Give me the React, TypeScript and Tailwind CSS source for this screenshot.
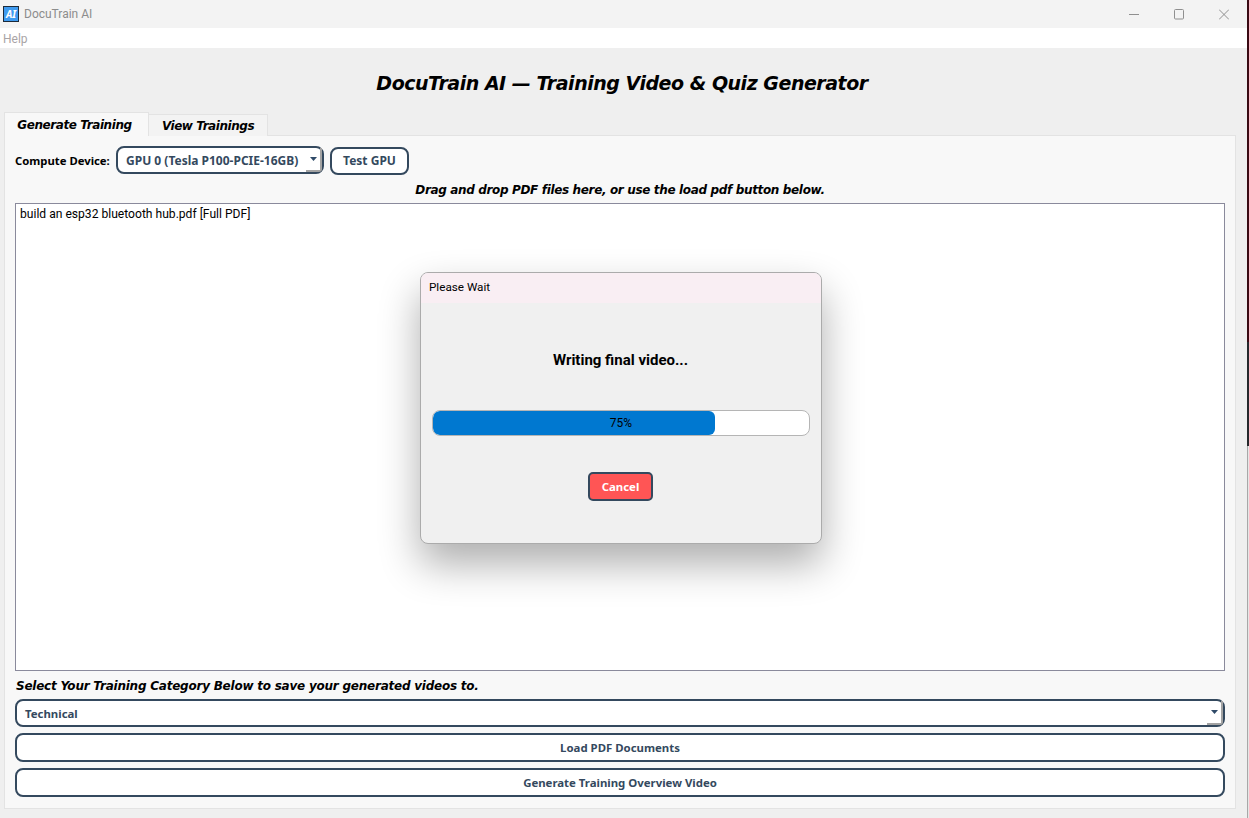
const uiFont = "[font-family:'Noto_Sans','Open_Sans',sans-serif]";
const plainFont = "[font-family:'Roboto',sans-serif]";
const headFont = "[font-family:'DejaVu_Sans',sans-serif]";

function ComboArrow() {
  return (
    <span className="absolute right-0 top-0 bottom-0 w-[16px] border-r-2 border-b-2 border-[#a3a3a3] rounded-br-[3px] flex items-center justify-center">
      <svg width="7" height="4" viewBox="0 0 7 4">
        <path d="M0 0h7L3.5 4z" fill="#2f4a68" />
      </svg>
    </span>
  );
}

function OutlineButton({ label, className = "" }: { label: string; className?: string }) {
  return (
    <button className={`bg-white border-2 border-[#34495e] rounded-[8px] font-bold text-[#34495e] ${className}`}>
      {label}
    </button>
  );
}

export default function App() {
  return (
    <div className={`relative w-[1249px] h-[818px] overflow-hidden flex bg-[#f2f2f2] ${uiFont}`}>
      <div className="relative w-[1247px] h-full bg-[#efefef] flex flex-col rounded-tr-[6px] overflow-hidden">
        {/* Title bar */}
        <div className="h-7 shrink-0 bg-[#f3f3f3] flex items-center pl-[3px] pr-[18px]">
          <span className="w-4 h-4 bg-[#3f9bf0] border border-[#1d2b3a] flex items-center justify-center text-white text-[10px] font-bold italic leading-none">
            AI
          </span>
          <span className={`ml-[5px] text-xs text-[#8c8c8c] ${plainFont}`}>DocuTrain AI</span>
          <div className="ml-auto flex items-center gap-[35px]">
            <svg width="10" height="11" viewBox="0 0 10 11"><path d="M0 5.5h10" stroke="#8f8f8f" /></svg>
            <svg width="10" height="11" viewBox="0 0 10 11"><rect x="0.5" y="0.5" width="9" height="9.5" rx="1" fill="none" stroke="#8f8f8f" /></svg>
            <svg width="10" height="11" viewBox="0 0 10 11"><path d="M0 0.5l10 10M10 0.5l-10 10" stroke="#8f8f8f" /></svg>
          </div>
        </div>

        {/* Menu bar */}
        <div className={`h-5 shrink-0 bg-white flex items-center pl-[3px] pt-[2px] text-xs text-[#a9a4a6] ${plainFont}`}>Help</div>

        {/* Heading */}
        <h1 className={`h-[65px] shrink-0 flex items-center justify-center pt-[5px] pr-[3px] text-[19px] font-bold italic text-black tracking-[-0.48px] ${headFont}`}>
          DocuTrain AI — Training Video &amp; Quiz Generator
        </h1>

        {/* Tabs */}
        <div className={`flex items-end h-[23px] shrink-0 pl-1 -mb-px relative z-10 text-xs font-bold italic text-black ${headFont}`}>
          <div className="h-[24px] w-[145px] bg-[#f8f8f8] border border-b-0 border-[#e3e3e3] flex items-center justify-center pr-[4px] tracking-[-0.42px]">Generate Training</div>
          <div className="h-[22px] w-[119px] bg-[#f3f3f3] border border-l-0 border-b-0 border-[#e3e3e3] flex items-center justify-center tracking-[-0.45px]">View Trainings</div>
        </div>

        {/* Panel */}
        <div className="ml-1 mr-[11px] h-[674px] shrink-0 bg-[#f8f8f8] border border-[#e3e3e3] px-[10px] pt-[10px] flex flex-col">
          <div className="flex items-start h-[29px]">
            <span className="text-[11.3px] leading-[30px] font-bold text-black w-[101px]">Compute Device:</span>
            <div className="relative w-[208px] h-[28px] bg-white border-2 border-[#34495e] rounded-[8px] flex items-center pl-2 pt-px text-xs font-bold text-[#34495e]">
              GPU 0 (Tesla P100-PCIE-16GB)
              <ComboArrow />
            </div>
            <OutlineButton label="Test GPU" className="ml-[6px] mt-px w-[79px] h-[28px] text-xs" />
          </div>
          <p className={`h-[28px] flex items-center justify-center pt-px text-xs font-bold italic text-black tracking-[-0.35px] ${headFont}`}>
            Drag and drop PDF files here, or use the load pdf button below.
          </p>
          <div className={`h-[468px] shrink-0 bg-white border border-[#8a8a9c] px-1 py-[2px] text-[12.1px] leading-[16px] text-black ${plainFont}`}>
            build an esp32 bluetooth hub.pdf [Full PDF]
          </div>
          <p className={`h-[28px] flex items-center pl-px pt-px text-xs font-bold italic text-black tracking-[-0.23px] ${headFont}`}>
            Select Your Training Category Below to save your generated videos to.
          </p>
          <div className="relative h-[28px] bg-white border-2 border-[#34495e] rounded-[8px] flex items-center pl-2 pt-px text-[11.4px] font-bold text-[#34495e]">
            Technical
            <ComboArrow />
          </div>
          <OutlineButton label="Load PDF Documents" className="mt-[6px] h-[29px] text-[11.4px]" />
          <OutlineButton label="Generate Training Overview Video" className="mt-[6px] h-[29px] text-[11.4px]" />
        </div>
      </div>

      {/* Desktop showing past the window edge */}
      <div className="w-[2px] h-full flex flex-col border-l border-[#a8a8a8]">
        <div className="h-[342px] bg-[#3a0a14] -ml-px" />
        <div className="h-[104px] bg-[#26282c] -ml-px" />
        <div className="flex-1 bg-[#e6e6e6]" />
      </div>

      {/* Progress dialog */}
      <div className={`absolute left-[420px] top-[272px] w-[402px] h-[272px] bg-[#f0f0f0] border border-[#ababab] rounded-[8px] overflow-hidden shadow-[0_20px_40px_rgba(0,0,0,0.32)] flex flex-col ${plainFont}`}>
        <div className="h-[30px] shrink-0 bg-[#f9eef3] flex items-center pl-2 text-[11.7px] text-black">Please Wait</div>
        <p className="mt-[47px] -ml-px text-center text-[15px] leading-5 font-bold text-black">Writing final video...</p>
        <div className="relative mx-[11px] mt-[40px] h-[26px] bg-white border border-[#b5b5b5] rounded-[8px] overflow-hidden">
          <div className="h-full w-[75%] bg-[#0078d0] rounded-[6px]" />
          <span className="absolute inset-0 flex items-center justify-center text-xs text-black">75%</span>
        </div>
        <button className={`self-center -ml-px mt-[36px] w-[65px] h-[29px] bg-[#ff5555] border-2 border-[#34495e] rounded-[5px] text-[11.4px] font-bold text-white ${uiFont}`}>
          Cancel
        </button>
      </div>
    </div>
  );
}
